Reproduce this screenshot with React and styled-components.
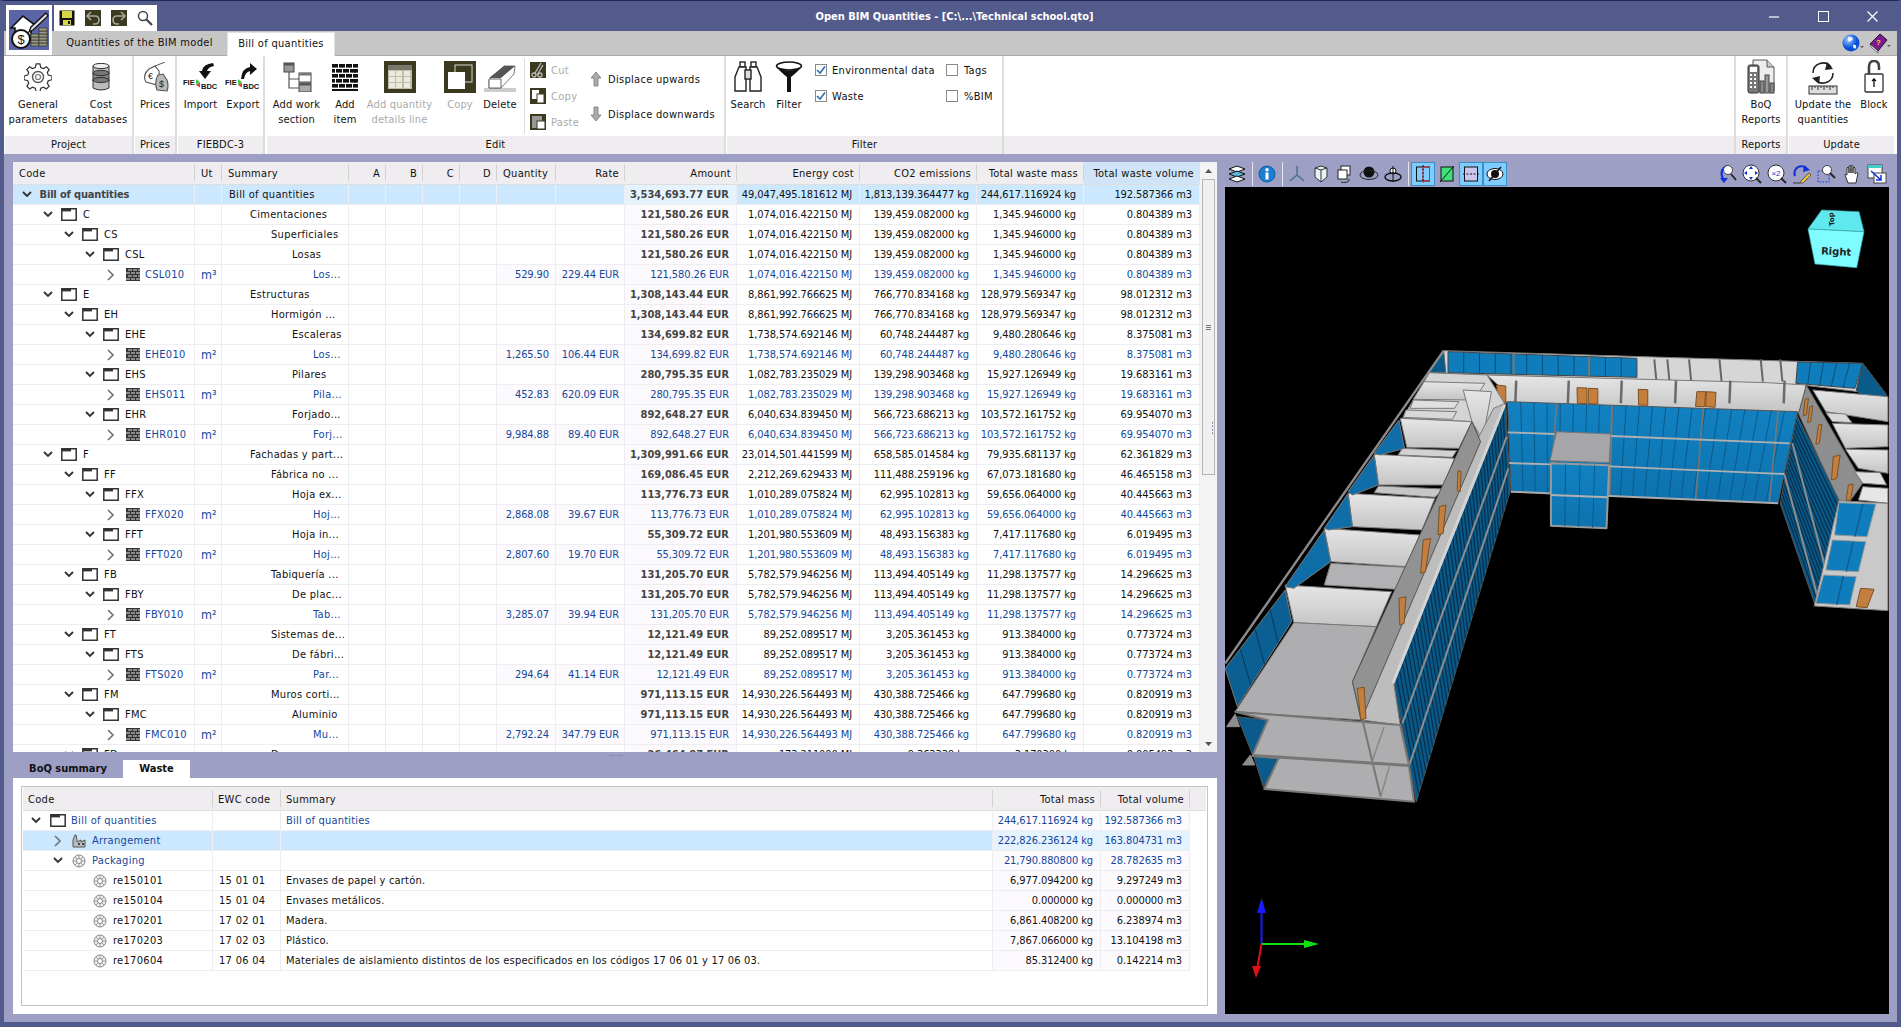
import React from "react";
import styled, { createGlobalStyle } from "styled-components";

const FONT = `"DejaVu Sans Condensed","DejaVu Sans","Liberation Sans",sans-serif`;

const Global = createGlobalStyle`
  html, body { margin: 0; padding: 0; background: #535a8c; overflow: hidden; }
  * { box-sizing: border-box; }
  body { font-family: ${FONT}; font-size: 11px; color: #111; letter-spacing: .3px; }
  svg text { letter-spacing: 0; }
`;

const Window = styled.div`
  position: relative; width: 1901px; height: 1027px; display: flex; flex-direction: column;
  background: #9d9fc5; border-top: 1px solid #1f2658; border-left: 4px solid #535a8c;
  border-right: 4px solid #535a8c; border-bottom: 5px solid #535a8c; overflow: hidden;
`;
const TitleBar = styled.div`
  height: 30px; flex: none; background: #535a8c; display: grid; grid-template-columns: 1fr auto 1fr;
  align-items: start; margin: 0 -4px; padding: 0 4px;
`;
const Title = styled.div`
  color: #fff; font-weight: 700; line-height: 32px; font-size: 11px; padding-left: 8px; letter-spacing: 0;
`;
const QuickAccess = styled.div`
  margin: 4px 0 0 50px; width: 103px; height: 26px; background: #fff; display: flex; align-items: center; gap: 1px;
`;
const QuickIcon = styled.div`
  width: 25px; height: 22px; display: flex; align-items: center; justify-content: center;
`;
const WinButtons = styled.div` display: flex; justify-content: flex-end; `;
const WinBtn = styled.div`
  width: 49px; height: 30px; display: flex; align-items: center; justify-content: center;
`;
const AppButton = styled.div`
  position: absolute; left: 2px; top: 4px; width: 46px; height: 50px; background: #fff; padding: 5px 3px 4px;
`;
const TabRow = styled.div`
  height: 25px; flex: none; background: #c6c6c6; border-bottom: 1px solid #aaa; display: flex; align-items: flex-end; padding-left: 48px;
`;
const RibbonTab = styled.div`
  height: 24px; line-height: 22px; width: ${p => p.$w}px; text-align: center; white-space: nowrap; margin-bottom: -1px;
  ${p => p.$active && `background: #fff; border: 1px solid #e2e2e2; border-bottom: none;`}
`;
const TabEnd = styled.div`
  margin-left: auto; display: flex; align-items: center; height: 24px; gap: 5px; padding-right: 6px;
`;
const Ribbon = styled.div` height: 98px; flex: none; display: flex; background: #fff; padding-left: 1px; letter-spacing: .15px; `;
const Group = styled.div`
  width: ${p => p.$w ? p.$w + "px" : "auto"}; ${p => !p.$w && "flex: 1;"} flex-shrink: 0; display: flex; flex-direction: column;
  margin-right: ${p => p.$gap ?? 1}px; ${p => !p.$last && "border-right: 2px solid #dcdcdc;"}
`;
const GroupBody = styled.div` flex: 1; display: flex; padding-top: 1px; min-height: 0; `;
const GroupLabel = styled.div`
  height: 18px; flex: none; background: #efedef; text-align: center; line-height: 18px; white-space: nowrap;
`;
const BigButton = styled.div`
  width: ${p => p.$w}px; flex: none; display: flex; flex-direction: column; align-items: center;
  color: ${p => p.$off ? "#aaa" : "#111"};
`;
const BigIcon = styled.div` height: 40px; display: flex; align-items: center; justify-content: center; `;
const BigText = styled.div` text-align: center; line-height: 15px; white-space: pre; `;
const SmallCol = styled.div`
  width: ${p => p.$w}px; flex: none; display: flex; flex-direction: column; padding-top: ${p => p.$top}px; gap: ${p => p.$gap}px;
`;
const SmallRow = styled.div`
  display: flex; align-items: center; gap: ${p => p.$gap ?? 5}px; height: 16px; padding-left: ${p => p.$pl ?? 0}px;
  color: ${p => p.$off ? "#aaa" : "#111"}; white-space: nowrap; letter-spacing: .3px;
`;
const VLine = styled.div` width: 1px; margin: 1px 5px 2px 9px; background: #dcdcdc; flex: none; `;
const CheckBox = styled.div`
  width: 12px; height: 12px; border: 1px solid #8a8a8a; background: #fff; display: flex; align-items: center; justify-content: center;
`;

const Main = styled.div` flex: 1; min-height: 0; display: flex; gap: 8px; padding: 8px 8px 8px 9px; `;
const LeftCol = styled.div` width: 1204px; flex: none; display: flex; flex-direction: column; position: relative; `;
const GridWrap = styled.div` height: 590px; flex: none; display: flex; background: #fff; `;
const GridArea = styled.div` width: 1187px; flex: none; overflow: hidden; `;
const T1 = "182px 27px 127px 37px 37px 37px 37px 59px 69px 112px 123px 117px 107px 116px";
const T2 = "190px 68px 712px 108px 89px";
const HeadRow = styled.div`
  display: grid; grid-template-columns: ${p => p.$cols}; height: ${p => p.$h}px; background: #efedef; border-bottom: 1px solid #dedede; align-items: stretch;
`;
const HeadCell = styled.div`
  display: flex; align-items: center; justify-content: ${p => p.$right ? "flex-end" : "flex-start"};
  padding: ${p => p.$pt ?? 0}px 6px 0 ${p => p.$pl ?? 6}px; white-space: nowrap; overflow: hidden; position: relative;
  ${p => p.$hot && "background: #cfe5f7;"}
  &::after { content: ""; position: absolute; right: 0; top: 3px; bottom: 3px; width: 1px; background: ${p => p.$noline ? "transparent" : "#d2d2d2"}; }
`;
const Row = styled.div`
  display: grid; grid-template-columns: ${p => p.$cols}; height: 20px; background: ${p => p.$sel ? "#cce8ff" : "#fff"};
  color: ${p => p.$blue ? "#14479b" : "#111"}; width: ${p => p.$w ? p.$w + "px" : "auto"};
`;
const Cell = styled.div`
  display: flex; align-items: center; justify-content: ${p => p.$right ? "flex-end" : "flex-start"};
  padding: 0 ${p => p.$pr ?? 7}px 0 ${p => p.$pl ?? 7}px; border-right: 1px solid #eeeef0; border-bottom: 1px solid #eeeef0; white-space: nowrap; overflow: hidden;
  ${p => p.$right && "letter-spacing: -.1px;"}
  ${p => p.$tint && `background: ${p.$tint};`}
  ${p => p.$bold && "font-weight: 700; color: #444; letter-spacing: 0;"}
  ${p => p.$blue && "color: #14479b;"}
`;
const UnitCell = styled(Cell)` font-size: 12.5px; letter-spacing: 0; `;
const LongCell = styled(Cell)` letter-spacing: .2px; `;
const CodeCell = styled(Cell)` padding: 0 0 0 ${p => p.$pl}px; `;
const CodeText = styled.span` margin-left: ${p => p.$ml ?? 6}px; ${p => p.$bold && "font-weight:700;color:#444;letter-spacing:-.15px;"} `;
const Chev = styled.span` width: 12px; flex: none; display: flex; justify-content: center; align-items: center; margin-right: ${p => p.$mr ?? 8}px; `;
const ScrollBar = styled.div`
  width: 17px; flex: none; background: #f3f3f3; display: flex; flex-direction: column; align-items: center; position: relative;
`;
const ScrollArrow = styled.div` height: 17px; flex: none; display: flex; align-items: center; justify-content: center; `;
const Thumb = styled.div`
  width: 13px; height: 296px; flex: none; background: #f0f0f0; border: 1px solid #b5b5b5; display: flex; flex-direction: column; justify-content: center; align-items: center; gap: 1px;
`;
const Grip = styled.i` display: block; width: 5px; height: 1px; background: #777; `;
const ScrollFill = styled.div` flex: 1; `;
const SubTabs = styled.div` height: 18px; margin-top: 8px; flex: none; display: flex; `;
const SubTab = styled.div`
  width: ${p => p.$w}px; text-align: center; line-height: 18px; font-weight: 700; font-size: 11px; color: #111; letter-spacing: 0;
  ${p => p.$active && "background:#fff;"}
`;
const LowerPanel = styled.div` flex: 1; background: #fff; padding: 8px 9px 8px 8px; min-height: 0; display: flex; `;
const LowerInner = styled.div` flex: 1; border: 1px solid #c4c4c4; background: #fff; padding: 0 1px; overflow: hidden; `;
const Dots = styled.div`
  position: absolute; left: ${p => p.$x}px; top: ${p => p.$y}px; width: ${p => p.$w}px; height: ${p => p.$h}px;
  background-image: radial-gradient(#77799e 0.8px, transparent 1px);
  background-size: ${p => p.$sx}px ${p => p.$sy}px;
`;
const Viewer = styled.div` width: 664px; flex: none; display: flex; flex-direction: column; `;
const ViewerBar = styled.div` height: 25px; flex: none; display: flex; align-items: flex-start; `;
const ToolBtn = styled.div`
  width: 24px; height: 24px; flex: none; display: flex; align-items: center; justify-content: center;
  ${p => p.$on && "background:#7fcdff;border:1px solid #3a8fc4;"}
  ${p => p.$ml && `margin-left:${p.$ml}px;`}
`;
const ToolSep = styled.div` width: 6px; height: 24px; flex: none; display: flex; justify-content: center; &::after{content:"";width:1px;background:#e6e6ef;} `;
const ToolSpacer = styled.div` flex: 1; `;
const Canvas = styled.div` flex: 1; background: #000; overflow: hidden; min-height: 0; `;
const CanvasSvg = styled.svg` display: block; width: 664px; height: 827px; `;

/* ---------- icons ---------- */
const S = ({ w, h, vb, children }) => <svg width={w} height={h} viewBox={vb || `0 0 ${w} ${h}`} style={{ display: "block", flex: "none" }}>{children}</svg>;

const AppIcon = () => (
  <S w={40} h={40}>
    <rect width="40" height="40" fill="#5a64a6" />
    <path d="M2 18 L14 6 L26 15 L23 18 L22 18 V30 H6 V18 Z" fill="#fff" stroke="#111" strokeWidth="1.6" />
    <path d="M37 3 L39 6 L24 20 L20 22 L22 17 Z" fill="#ddd" stroke="#111" strokeWidth="1.3" />
    <g fill="#9a9a80" stroke="#333" strokeWidth=".7">
      {[0,1,2,3].map(i => <rect key={i} x="22" y={33 - i * 3} width="8" height="3" />)}
      {[0,1,2,3,4,5].map(i => <rect key={i} x="30" y={33 - i * 3} width="8" height="3" />)}
    </g>
    <circle cx="12" cy="29" r="9" fill="#fff" stroke="#111" strokeWidth="2" />
    <text x="12" y="34" textAnchor="middle" fontSize="13" fontFamily="Liberation Sans" fill="#111">$</text>
  </S>
);
const Floppy = () => (
  <S w={16} h={16}>
    <rect x=".5" y=".5" width="15" height="15" fill="#111" />
    <rect x="3" y="1" width="10" height="7" fill="#d8d44a" />
    <rect x="4" y="10" width="8" height="5" fill="#d8d44a" />
    <rect x="9" y="11" width="2" height="3" fill="#111" />
  </S>
);
const UndoIcon = ({ flip }) => (
  <S w={16} h={16}>
    <rect width="16" height="16" fill="#3c3a1e" />
    <g transform={flip ? "translate(16,0) scale(-1,1)" : ""} fill="none" stroke="#a8a8a0" strokeWidth="1.6">
      <path d="M3 6 H10 Q14 6 14 10 Q14 14 10 14 H8" />
      <path d="M6 2 L2 6 L6 10" />
    </g>
  </S>
);
const Magnifier = ({ s = 16 }) => (
  <S w={s} h={s} vb="0 0 16 16">
    <circle cx="6" cy="6" r="4.5" fill="#fff" stroke="#444" strokeWidth="1.5" />
    <path d="M9.5 9.5 L15 15" stroke="#444" strokeWidth="2.2" />
  </S>
);
const Gear = () => (
  <S w={28} h={28}>
    <path d="M12 1 h4 l1 4 3 1 3-2 3 3-2 3 1 3 4 1 v4 l-4 1 -1 3 2 3 -3 3 -3-2 -3 1 -1 4 h-4 l-1-4 -3-1 -3 2 -3-3 2-3 -1-3 -4-1 v-4 l4-1 1-3 -2-3 3-3 3 2 3-1 z"
      transform="translate(1 0) scale(.93)" fill="#fff" stroke="#333" strokeWidth="1.3" />
    <circle cx="14" cy="14" r="5.5" fill="#fff" stroke="#555" strokeWidth="1.4" />
    <circle cx="14" cy="14" r="2.5" fill="#fff" stroke="#777" strokeWidth="1.2" />
  </S>
);
const DbIcon = () => (
  <S w={18} h={28}>
    {[3, 10, 17].map(y => (
      <g key={y}>
        <path d={`M1 ${y} V${y + 8} Q9 ${y + 12} 17 ${y + 8} V${y} Z`} fill={y === 10 ? "#888" : "#bbb"} stroke="#333" />
        <ellipse cx="9" cy={y} rx="8" ry="2.6" fill={y === 3 ? "#eee" : "#777"} stroke="#333" />
      </g>
    ))}
  </S>
);
const TagsIcon = () => (
  <S w={28} h={30}>
    <path d="M8 7 L14 4 L18 9 Q19 17 16 23 L5 20 Q1 13 8 7 Z" fill="#fff" stroke="#555" strokeWidth="1.1" />
    <path d="M17 13 L22 12 L26 18 Q28 24 26 29 L16 28 Q13 20 17 13 Z" fill="#bbb" stroke="#555" strokeWidth="1.1" />
    <text x="9.5" y="17" textAnchor="middle" fontSize="9" fontFamily="Liberation Sans" fill="#222">€</text>
    <text x="20.5" y="25" textAnchor="middle" fontSize="9" fontFamily="Liberation Sans" fill="#222">$</text>
    <path d="M14 4 L24 0" stroke="#555" />
  </S>
);
const FieIcon = ({ up }) => (
  <S w={36} h={30}>
    <g transform="translate(16 0)">
      {up
        ? <path d="M0 17 Q1 6 9 5 V1 L16 7 L9 13 V9 Q4 10 3 17 Z" fill="#111" />
        : <path d="M14 1 Q4 2 3 9 H0 L6 17 L12 9 H8 Q9 5 15 4 Z" fill="#111" />}
    </g>
    <text x="0" y="23" fontSize="7.5" fontWeight="700" fontFamily="Liberation Sans" fill="#111">FIE</text>
    <text x="18" y="26.5" fontSize="7.5" fontWeight="700" fontFamily="Liberation Sans" fill="#111">BDC</text>
    <path d="M13 17 L17 20 L13 23 Z" fill="#3fcf3f" />
    <path d="M17 24 L13 26.5 L17 29 Z" transform="translate(0 -3.5)" fill="#e23a3a" />
  </S>
);
const TreeIcon = () => (
  <S w={30} h={30}>
    <rect x="2" y="1" width="10" height="9" fill="#999" stroke="#444" />
    <rect x="2" y="1" width="10" height="2.5" fill="#555" />
    <path d="M7 10 V26 H18 M7 17 H18" fill="none" stroke="#555" strokeWidth="1.2" />
    <rect x="17" y="11" width="12" height="9" fill="#fff" stroke="#444" /><rect x="17" y="11" width="12" height="2.5" fill="#777" />
    <rect x="17" y="21" width="12" height="9" fill="#aaa" stroke="#444" /><rect x="17" y="21" width="12" height="2.5" fill="#555" />
  </S>
);
const BrickBig = () => (
  <S w={26} h={28}>
    {[0, 1, 2, 3, 4].map(r => [0, 1, 2, 3].map(c => (
      <rect key={`${r}${c}`} x={(r % 2 ? -3 : 0) + c * 7} y={1 + r * 5} width="6" height="3.6" fill="#111" />
    )))}
    <rect x="0" y="26" width="26" height="2" fill="#111" />
    <rect x="22" y="6" width="4" height="3.6" fill="#111" /><rect x="22" y="16" width="4" height="3.6" fill="#111" />
  </S>
);
const TableIcon = () => (
  <S w={32} h={32}>
    <rect width="32" height="32" fill="#3c3a1e" />
    <rect x="4" y="4" width="24" height="24" fill="#bdbdb0" />
    <rect x="4" y="4" width="24" height="5" fill="#77776a" />
    {[10, 16, 22].map(y => [5, 12, 20].map(x => <rect key={`${x}${y}`} x={x} y={y} width="6" height="5" fill="#e9e9dc" />))}
  </S>
);
const CopyBig = () => (
  <S w={32} h={32}>
    <rect width="32" height="32" fill="#3c3a1e" />
    <rect x="11" y="4" width="17" height="17" fill="none" stroke="#d5d5d5" />
    <rect x="4" y="11" width="17" height="17" fill="#fff" />
  </S>
);
const Eraser = () => (
  <S w={32} h={30}>
    <path d="M0 26 H32 V30 H0 Z" fill="#ccc" />
    <path d="M5 18 L20 4 H31 L30 12 L17 26 H5 Z" fill="#fff" stroke="#777" />
    <path d="M17 16 L31 4 H20 L5 16 Z" fill="#555" />
    <path d="M5 17 H17 V26 H5 Z" fill="#fff" stroke="#666" />
  </S>
);
const SmallOlive = ({ kind }) => (
  <S w={16} h={16}>
    <rect width="16" height="16" fill="#3c3a1e" />
    {kind === "cut" && <g stroke="#bbb" fill="none" strokeWidth="1.3"><path d="M11 1 L5 11 M13 3 L7 13" /><circle cx="4" cy="13" r="2" /><circle cx="10" cy="13" r="2" /></g>}
    {kind === "copy" && <g fill="#fff"><rect x="2" y="2" width="7" height="9" /><rect x="7" y="6" width="7" height="9" stroke="#3c3a1e" /></g>}
    {kind === "paste" && <g><rect x="2" y="2" width="10" height="12" fill="#999" /><rect x="7" y="7" width="8" height="8" fill="#fff" stroke="#3c3a1e" /></g>}
  </S>
);
const ArrowUD = ({ down }) => (
  <S w={12} h={16}>
    <path d={down ? "M4 1 H8 V9 H11 L6 15 L1 9 H4 Z" : "M6 1 L11 7 H8 V15 H4 V7 H1 Z"} fill="#aaa" stroke="#888" />
  </S>
);
const Binoculars = () => (
  <S w={28} h={32}>
    <g fill="#fff" stroke="#222" strokeWidth="1.4">
      <rect x="6" y="1" width="5" height="5" /><rect x="17" y="1" width="5" height="5" />
      <path d="M5 6 H12 V14 H12 V30 H1 V16 Z" /><path d="M16 6 H23 L27 16 V30 H16 V14 Z" />
      <rect x="11" y="9" width="6" height="9" fill="#ddd" />
    </g>
  </S>
);
const Funnel = () => (
  <S w={28} h={32}>
    <ellipse cx="14" cy="5" rx="12.5" ry="4" fill="#fff" stroke="#111" strokeWidth="1.5" />
    <path d="M2 7 Q8 13 12 16 V31 H16 V16 Q20 13 26 7 Q14 12 2 7 Z" fill="#111" />
  </S>
);
const Check = () => <S w={10} h={10}><path d="M1 5 L4 8 L9 1.5" fill="none" stroke="#2a6fb5" strokeWidth="1.6" /></S>;
const ReportIcon = () => (
  <S w={28} h={36}>
    <path d="M6 1 H20 L27 8 V32 H6 Z" fill="#eee" stroke="#555" />
    <path d="M20 1 V8 H27" fill="#ccc" stroke="#555" />
    <rect x="1" y="6" width="11" height="28" rx="2" fill="#777" stroke="#333" />
    <rect x="3" y="8" width="7" height="5" fill="#fff" />
    {[15, 19, 23, 27].map(y => <g key={y}><rect x="3" y={y} width="2" height="2" fill="#fff" /><rect x="7" y={y} width="2" height="2" fill="#fff" /></g>)}
    <rect x="13" y="22" width="4" height="12" fill="#888" stroke="#444" />
    <rect x="18" y="16" width="4" height="18" fill="#999" stroke="#444" />
    <rect x="23" y="24" width="4" height="10" fill="#888" stroke="#444" />
  </S>
);
const UpdateIcon = () => (
  <S w={30} h={36}>
    <path d="M5 14 A10 10 0 0 1 23 8" fill="none" stroke="#222" strokeWidth="1.5" /><path d="M19 3 L25 10 L17 11 Z" fill="#222" />
    <path d="M25 14 A10 10 0 0 1 7 20" fill="none" stroke="#222" strokeWidth="1.5" /><path d="M11 25 L4 19 L12 17 Z" fill="#222" />
    <rect x="1" y="27" width="28" height="8" fill="#ddd" stroke="#333" />
    <path d="M4 27 v4 M7 27 v2 M10 27 v4 M13 27 v2 M16 27 v4 M19 27 v2 M22 27 v4 M25 27 v2" stroke="#333" />
  </S>
);
const LockIcon = () => (
  <S w={20} h={34}>
    <path d="M5 14 V7 Q5 1 10 1 Q15 1 15 7 V10" fill="none" stroke="#444" strokeWidth="2.6" />
    <rect x="1" y="14" width="18" height="18" rx="1" fill="#fff" stroke="#333" strokeWidth="1.3" />
    <path d="M10 19 V27 M8 21 L10 19 L12 21" stroke="#111" fill="none" strokeWidth="1.3" />
  </S>
);
const Globe = () => (
  <S w={22} h={22}>
    <defs><radialGradient id="gl" cx=".35" cy=".3"><stop offset="0" stopColor="#9fd0ff" /><stop offset="1" stopColor="#0b4fd8" /></radialGradient></defs>
    <circle cx="9" cy="11" r="8.5" fill="url(#gl)" />
    <path d="M6 5 Q10 4 11 7 Q8 11 6 9 Z M11 13 Q15 12 14 16 Q11 18 11 13 Z" fill="#e9f3ff" />
    <path d="M18 14 h4 l-2 2 z" fill="#555" />
  </S>
);
const HelpBook = () => (
  <S w={22} h={22}>
    <path d="M1 12 L11 2 L18 8 L9 19 Z" fill="#7d1a8f" stroke="#2a0e33" />
    <path d="M1 12 L9 19 L9 21 L2 15 Z" fill="#eee" stroke="#333" strokeWidth=".6" />
    <text x="9.5" y="13" textAnchor="middle" fontSize="8" fontWeight="700" fontFamily="Liberation Sans" fill="#f2d43a">?</text>
    <path d="M18 13 h4 l-2 2 z" fill="#555" />
  </S>
);
const ChevDown = () => <S w={10} h={7}><path d="M1 1 L5 5 L9 1" fill="none" stroke="#333" strokeWidth="1.9" /></S>;
const ChevRight = () => <S w={7} h={12}><path d="M1 1 L6 6 L1 11" fill="none" stroke="#777" strokeWidth="1.7" /></S>;
const Folder = () => (
  <S w={16} h={13}>
    <path d="M.8 .8 H15.2 V12.2 H.8 Z" fill="#fff" stroke="#333" strokeWidth="1.5" />
    <rect x="1" y="1" width="9" height="2.4" fill="#333" />
  </S>
);
const BrickSmall = () => (
  <S w={14} h={13}>
    <rect width="14" height="13" fill="#333" />
    {[0, 1, 2, 3].map(r => [0, 1, 2].map(c => <rect key={`${r}${c}`} x={(r % 2 ? 0 : 2) + c * 5} y={1 + r * 3} width="4" height="2" fill="#8a8a8a" />))}
  </S>
);
const WasteIcon = () => (
  <S w={14} h={14}>
    <circle cx="7" cy="7" r="6" fill="#eee" stroke="#888" />
    <path d="M7 1 V13 M1 7 H13 M3 3 L11 11 M11 3 L3 11" stroke="#999" strokeWidth=".9" />
    <circle cx="7" cy="7" r="2.5" fill="#fff" stroke="#888" />
  </S>
);
const FactoryIcon = () => (
  <S w={14} h={14}>
    <path d="M1 13 V6 L3 1 H4 L5 6 V8 L9 6 V8 L13 6 V13 Z" fill="#bbb" stroke="#555" />
    <rect x="6" y="9" width="2" height="2" fill="#444" /><rect x="10" y="9" width="2" height="2" fill="#444" />
  </S>
);
const ArrowTiny = ({ down }) => <S w={9} h={6}><path d={down ? "M1 1 H8 L4.5 5 Z" : "M1 5 H8 L4.5 1 Z"} fill="#555" /></S>;

const tb = {
  layers: <S w={18} h={18}><g stroke="#111" fill="#fff"><path d="M1 4 L9 1 L17 4 L9 7 Z" /><path d="M1 9 L9 6 L17 9 L9 12 Z" fill="#5fb6d8" /><path d="M1 14 L9 11 L17 14 L9 17 Z" /></g></S>,
  info: <S w={18} h={18}><circle cx="9" cy="9" r="8" fill="#1a7fd1" stroke="#0c5ea0" /><rect x="7.5" y="7.5" width="3" height="7" fill="#fff" /><circle cx="9" cy="4.8" r="1.7" fill="#fff" /></S>,
  axes: <S w={18} h={18}><path d="M9 1 V10 L2 16 M9 10 L16 16" fill="none" stroke="#46727f" strokeWidth="1.4" /></S>,
  box: <S w={18} h={18}><path d="M3 3 L9 1 L15 3 V12 L9 17 L3 12 Z" fill="#e8f4f4" stroke="#333" /><path d="M3 3 L9 5 L15 3 M9 5 V17" fill="none" stroke="#333" /></S>,
  cube2: <S w={18} h={18}><rect x="5" y="1" width="9" height="9" fill="#fff" stroke="#222" /><rect x="2" y="5" width="9" height="9" fill="#fff" stroke="#222" /><path d="M5 17 A5 3 0 0 0 13 14" fill="none" stroke="#222" /></S>,
  sphere: <S w={20} h={18}><circle cx="10" cy="7" r="5.5" fill="#111" /><ellipse cx="10" cy="10" rx="9" ry="4.5" fill="none" stroke="#222" /></S>,
  orbit: <S w={20} h={18}><circle cx="10" cy="6" r="3" fill="#fff" stroke="#111" /><path d="M10 1 V17" stroke="#111" /><ellipse cx="10" cy="12" rx="8" ry="4" fill="none" stroke="#111" strokeWidth="1.4" /></S>,
  clip1: <S w={16} h={18}><rect x="1.5" y="2" width="13" height="14" fill="none" stroke="#111" /><rect x="8" y="2" width="6.5" height="14" fill="none" stroke="#e32222" /><path d="M8 0 V18" stroke="#111" strokeDasharray="2 1.5" /></S>,
  clip2: <S w={16} h={18}><rect x="2" y="2" width="12" height="14" fill="#3fe07a" stroke="#111" /><path d="M1 17 L15 1" stroke="#111" /></S>,
  clip3: <S w={16} h={18}><rect x="1.5" y="2" width="13" height="14" fill="#c9c6ea" stroke="#111" /><path d="M0 9 H16" stroke="#111" strokeDasharray="2 1.5" /></S>,
  eye: <S w={18} h={16}><ellipse cx="9" cy="8" rx="8" ry="5.5" fill="#fff" stroke="#111" /><circle cx="9" cy="8" r="4" fill="#111" /><path d="M3 15 L15 1" stroke="#111" strokeWidth="1.5" /></S>,
  zoomPrev: <S w={20} h={20}><path d="M7 17 Q1 6 10 2" fill="none" stroke="#1430d8" strokeWidth="2.2" /><path d="M3 14 L7 19 L11 14 Z" fill="#1430d8" /><circle cx="11" cy="6" r="4.5" fill="#fff" stroke="#444" /><path d="M14 10 L19 16" stroke="#222" strokeWidth="1.8" /></S>,
  zoomAll: <S w={20} h={20}><circle cx="9" cy="9" r="8" fill="#fff" stroke="#333" /><path d="M9 2 L11 5 H7 Z M9 16 L11 13 H7 Z M2 9 L5 7 V11 Z M16 9 L13 7 V11 Z" fill="#1430d8" /><path d="M14 14 L19 19" stroke="#222" strokeWidth="1.8" /></S>,
  zoom2: <S w={20} h={20}><circle cx="9" cy="9" r="8" fill="#fff" stroke="#333" /><text x="9" y="12" textAnchor="middle" fontSize="8" fontFamily="Liberation Sans" fill="#1430d8">×2</text><path d="M14 14 L19 19" stroke="#222" strokeWidth="1.8" /></S>,
  redraw: <S w={20} h={20}><path d="M3 12 A7 7 0 0 1 15 5" fill="none" stroke="#1430d8" strokeWidth="2" /><path d="M12 1 L18 6 L11 8 Z" fill="#1430d8" /><path d="M9 17 L17 9 L19 11 L11 19 L8 19 Z" fill="#f0c23a" stroke="#333" strokeWidth=".7" /><path d="M1 19 H8" stroke="#333" /></S>,
  zoomWin: <S w={20} h={20}><rect x="1" y="7" width="11" height="11" fill="none" stroke="#1430d8" strokeDasharray="1.5 1.5" /><circle cx="10" cy="6" r="4.5" fill="#fff" stroke="#444" /><path d="M13 9 L18 14" stroke="#222" strokeWidth="1.8" /></S>,
  hand: <S w={18} h={20}><path d="M5 19 L2 11 Q2 9 4 11 V4 Q5 2 6 4 V9 V2 Q7 1 8 2 V9 V2 Q9 1 10 2 V9 V4 Q11 2 12 4 V10 Q14 8 15 9 L13 19 Z" fill="#fff" stroke="#333" /></S>,
  maxV: <S w={20} h={20}><rect x="1" y="1" width="14" height="13" fill="#fff" stroke="#444" /><rect x="1" y="1" width="14" height="3" fill="#3fd0c8" /><rect x="7" y="9" width="12" height="10" fill="#fff" stroke="#444" /><path d="M4 7 L14 16 M14 11 V16 H9" fill="none" stroke="#1430d8" strokeWidth="1.5" /></S>,
};

/* ---------- 3D model, drawn in the crop's coordinates ---------- */
const lerp = (a, b, t) => [a[0] + (b[0] - a[0]) * t, a[1] + (b[1] - a[1]) * t];
const Poly = ({ p, f, s = "#7a7a7a", w = 1 }) => <polygon points={p} fill={f} stroke={s} strokeWidth={w} vectorEffect="non-scaling-stroke" strokeLinejoin="round" />;
const L = ({ a, b, s = "#888", w = 1.2 }) => <line x1={a[0]} y1={a[1]} x2={b[0]} y2={b[1]} stroke={s} strokeWidth={w} vectorEffect="non-scaling-stroke" />;
const Mull = ({ a, b, c, d, n, s, w = 1 }) => <>{Array.from({ length: n - 1 }, (_, i) => { const t = (i + 1) / n; return <L key={i} a={lerp(a, b, t)} b={lerp(c, d, t)} s={s} w={w} />; })}</>;
const Door = ({ p }) => <Poly p={p} f="#c47f3e" s="#7a5228" />;

const Model = () => (
  <g transform="translate(-5,153) scale(0.4343,0.33333)">
    <defs>
      <linearGradient id="wall" x1="0" y1="0" x2="0" y2="1"><stop offset="0" stopColor="#e6e6e6" /><stop offset="1" stopColor="#c4c4c4" /></linearGradient>
      <linearGradient id="glass" x1="0" y1="0" x2="0" y2="1"><stop offset="0" stopColor="#1282c2" /><stop offset="1" stopColor="#0d72ae" /></linearGradient>
    </defs>
    {/* back façade */}
    <Poly p="515,32 1480,70 1535,165 1340,135 620,105 480,98" f="#d6d6d6" />
    <Poly p="525,35 960,55 960,112 525,98" f="#0f7cbc" s="#444" />
    <Mull a={[525, 35]} b={[960, 55]} c={[525, 98]} d={[960, 112]} n={12} s="#0a4f78" />
    <L a={[676, 42]} b={[676, 102]} s="#777" w={2} /><L a={[850, 50]} b={[850, 108]} s="#777" w={2} />
    <Poly p="1330,66 1480,70 1462,145 1326,130" f="#0f7cbc" s="#444" />
    <Mull a={[1330, 66]} b={[1480, 70]} c={[1326, 130]} d={[1462, 145]} n={5} s="#0a4f78" />
    <Poly p="1480,70 1535,165 1530,245 1465,150" f="#0a5a8a" s="#444" />
    <Poly p="515,32 480,98 520,98" f="#0a5a8a" s="#666" />
    {[1000, 1030, 1080, 1150, 1245, 1290].map(x => <L key={x} a={[x, 58]} b={[x + 5, 125]} s="#666" w={2} />)}
    {/* corridor wall */}
    <Poly p="615,105 1260,128 1350,135 1340,218 660,188 640,135" f="url(#wall)" />
    {[682, 803, 925, 1050, 1175, 1300].map(x => <L key={x} a={[x, 122]} b={[x - 2, 190]} s="#6a6a6a" w={2.5} />)}
    <Door p="637,135 658,138 658,187 640,186" />
    <Door p="822,143 845,144 845,191 823,190" />
    <Door p="848,145 870,146 870,192 848,191" />
    <Door p="963,148 985,149 985,196 964,195" />
    <Door p="1098,155 1118,155 1116,200 1095,199" />
    <Door p="1120,155 1142,157 1140,202 1118,200" />
    {/* upper-left room cluster */}
    <Poly p="482,98 615,105 655,190 600,305 582,245 420,235 470,125" f="#d4d4d4" />
    <Poly p="470,125 610,130 585,180 445,178" f="url(#wall)" />
    <Poly p="445,180 550,185 540,205 438,205" f="#e0e0e0" />
    <Poly p="428,210 545,215 535,238 422,232" f="#d8d8d8" />
    <Poly p="560,150 625,155 605,300 580,245" f="url(#wall)" />
    {/* front façade */}
    <Poly p="662,185 1330,215 1285,490 670,455" f="url(#glass)" s="#555" />
    <Mull a={[662, 185]} b={[1330, 215]} c={[670, 455]} d={[1285, 490]} n={22} s="#0a5a8c" />
    <L a={[775, 190]} b={[765, 370]} s="#777" w={1.6} />
    <L a={[903, 197]} b={[897, 465]} s="#777" w={2} />
    <L a={[1113, 205]} b={[1095, 480]} s="#777" w={1.6} />
    <L a={[1285, 213]} b={[1265, 485]} s="#777" w={1.6} />
    <L a={[662, 277]} b={[770, 282]} s="#b0b0b0" w={1.8} />
    <L a={[900, 288]} b={[1312, 310]} s="#b0b0b0" w={1.8} />
    <L a={[664, 369]} b={[762, 373]} s="#b0b0b0" w={1.8} />
    <L a={[898, 379]} b={[1300, 402]} s="#b0b0b0" w={1.8} />
    <L a={[670, 455]} b={[1285, 490]} s="#aaa" w={2} />
    {/* porch */}
    <Poly p="775,275 900,282 896,368 760,362" f="#a6a5a8" s="#777" />
    <Poly p="762,370 896,376 890,565 762,557" f="url(#glass)" s="#999" w={2} />
    <Mull a={[762, 372]} b={[896, 378]} c={[762, 557]} d={[890, 565]} n={4} s="#0a5a8c" />
    <L a={[762, 465]} b={[892, 472]} s="#b0b0b0" w={2} />
    {/* left wing right façade */}
    <Poly p="658,190 668,455 452,1385 400,1030" f="#0a5886" s="#555" />
    <Mull a={[658, 190]} b={[400, 1030]} c={[668, 455]} d={[452, 1385]} n={40} s="#052f4e" w={1.2} />
    <L a={[660, 290]} b={[420, 1150]} s="#8e8e8e" w={2} />
    <L a={[664, 385]} b={[436, 1275]} s="#8e8e8e" w={2} />
    {/* left wing interior: rooms */}
    <Poly p="150,735 395,755 360,860 170,848" f="url(#wall)" />
    <Poly p="240,565 460,585 430,680 255,665" f="url(#wall)" />
    <Poly p="295,460 495,475 465,570 305,560" f="url(#wall)" />
    <Poly p="355,343 540,355 515,435 365,435" f="url(#wall)" />
    <Poly p="415,235 580,245 550,325 430,322" f="url(#wall)" />
    <Poly p="255,670 430,682 405,748 240,735" f="#b2b1b4" />
    <Poly p="365,438 515,447 495,472 355,458" f="#c6c6c6" />
    <Poly p="420,325 545,332 535,352 410,345" f="#d2d2d2" />
    <Poly p="170,848 360,860 305,1025 325,1140 35,1115" f="#aeadb0" />
    {/* window strips on the outer wall */}
    <Poly p="12,985 150,750 165,845 40,1100" f="#0b5f93" s="#777" />
    <Mull a={[12, 985]} b={[150, 750]} c={[40, 1100]} d={[165, 845]} n={4} s="#06395c" />
    <Poly p="150,740 240,570 255,665 170,745" f="#0f6ea8" s="#777" />
    <Poly p="240,565 295,460 305,560 250,570" f="#0f6ea8" s="#777" />
    <Poly p="295,455 355,345 365,435 305,465" f="#0f6ea8" s="#777" />
    <Poly p="355,340 412,240 425,325 368,345" f="#0f6ea8" s="#777" />
    <L a={[515, 32]} b={[12, 970]} s="#8c8c8c" w={2.4} />
    {/* corridor wall of left wing */}
    <Poly p="630,205 305,1025 325,1140 415,1155 400,1030 658,190" f="#bdbdbd" />
    <Poly p="580,245 305,1025 325,1140 600,305" f="#929292" s="#555" />
    <L a={[655, 195]} b={[398, 1030]} s="#d4d4d4" w={3} />
    {/* left-wing doors */}
    {["548,392 555,395 553,455 546,452", "505,500 520,495 514,580 502,585", "468,600 485,595 473,695 462,700", "412,775 428,770 424,850 414,855", "316,1045 332,1042 336,1135 324,1140"].map(p => <Door key={p} p={p} />)}
    {/* lower floors */}
    <Poly p="40,1130 110,1140 75,1245" f="#0a5a8c" s="#555" />
    <Poly p="78,1250 135,1255 100,1342" f="#0a5a8c" s="#555" />
    <Poly p="35,1115 415,1155 435,1275 75,1245 110,1140" f="#aeadb0" s="#777" w={2} />
    <Poly p="75,1248 435,1278 447,1385 102,1347 135,1255" f="#aeadb0" s="#777" w={2} />
    <L a={[328, 1140]} b={[370, 1370]} s="#777" w={2} />
    <L a={[378, 1160]} b={[350, 1265]} s="#888" w={1.5} />
    <L a={[390, 1280]} b={[370, 1370]} s="#888" w={1.5} />
    <Poly p="15,1160 45,1160 35,1122" f="#8d8d8d" s="#8d8d8d" />
    <Poly p="52,1275 80,1275 70,1245" f="#8d8d8d" s="#8d8d8d" />
    {/* right wing */}
    <Poly p="1350,135 1480,430 1450,485 1425,485 1332,222" f="#8e8e8e" s="#555" />
    <Poly p="1328,225 1425,480 1412,590 1370,795 1290,490" f="#0a5886" s="#555" />
    <Mull a={[1328, 225]} b={[1290, 490]} c={[1425, 480]} d={[1370, 795]} n={18} s="#052f4e" w={1.2} />
    <L a={[1318, 310]} b={[1395, 690]} s="#8e8e8e" w={2} />
    <L a={[1300, 405]} b={[1378, 780]} s="#8e8e8e" w={2} />
    <Door p="1347,178 1355,175 1350,225 1343,228" />
    <Door p="1358,200 1365,198 1360,245 1353,248" />
    <Door p="1378,255 1386,252 1380,310 1372,313" />
    <Door p="1412,350 1428,345 1420,415 1408,420" />
    <Door p="1447,435 1458,432 1452,480 1442,480" />
    <Poly p="1365,150 1538,170 1538,245 1395,215" f="url(#wall)" />
    <Poly p="1395,218 1440,222 1455,248 1410,245" f="#d8d8d8" />
    <Poly p="1410,250 1538,255 1538,320 1440,325" f="url(#wall)" />
    <Poly p="1440,328 1538,330 1538,400 1470,385" f="url(#wall)" />
    <Poly p="1462,395 1520,398 1535,435 1480,430" f="#e0e0e0" />
    <Poly p="1480,440 1538,445 1538,490 1470,480" f="#e6e6e6" />
    <Poly p="1425,482 1538,490 1538,812 1368,798" f="#c9c9c9" s="#777" />
    <Poly p="1425,488 1510,492 1490,590 1415,585" f="#0f7cbc" s="#999" />
    <Poly p="1410,600 1487,605 1470,695 1395,690" f="#0f7cbc" s="#999" />
    <Poly p="1390,705 1465,710 1450,795 1372,790" f="#0f7cbc" s="#999" />
    <L a={[1480, 492]} b={[1462, 590]} s="#0a5a8c" /><L a={[1458, 605]} b={[1442, 695]} s="#0a5a8c" /><L a={[1435, 708]} b={[1420, 795]} s="#0a5a8c" />
    <Door p="1475,745 1506,748 1490,803 1465,800" />
  </g>
);

const Cube = () => (
  <g>
    <polygon points="596.7,23 634,24.7 639,44.7 583,42" fill="#5fe8ee" stroke="#3aa7ad" strokeWidth=".7" />
    <polygon points="583,42 639,44.7 631.7,80.7 590,77" fill="#7ffcff" stroke="#3aa7ad" strokeWidth=".7" />
    <text transform="translate(611,68) rotate(3)" textAnchor="middle" fontFamily="DejaVu Sans" fontWeight="700" fontSize="10" fill="#222">Right</text>
    <text transform="translate(609,32) rotate(-95)" textAnchor="middle" fontFamily="DejaVu Sans" fontWeight="700" fontSize="7" fill="#222">Top</text>
  </g>
);
const Axes = () => (
  <g transform="translate(0 1)">
    <line x1="36.5" y1="756" x2="36.5" y2="720" stroke="#1a1aff" strokeWidth="2" />
    <polygon points="36.5,710 32,725 41,725" fill="#1a1aff" />
    <line x1="36.5" y1="756" x2="80" y2="756" stroke="#12e012" strokeWidth="2" />
    <polygon points="94,756 79,752 79,760" fill="#12e012" />
    <line x1="36.5" y1="756" x2="32" y2="782" stroke="#e01010" strokeWidth="2" />
    <polygon points="31,790 27,778 36,778" fill="#e01010" />
  </g>
);

/* ---------- data ---------- */
const V = {
  root: ["3,534,693.77 EUR", "49,047,495.181612 MJ", "1,813,139.364477 kg", "244,617.116924 kg", "192.587366 m3"],
  c: ["121,580.26 EUR", "1,074,016.422150 MJ", "139,459.082000 kg", "1,345.946000 kg", "0.804389 m3"],
  e: ["1,308,143.44 EUR", "8,861,992.766625 MJ", "766,770.834168 kg", "128,979.569347 kg", "98.012312 m3"],
  ehe: ["134,699.82 EUR", "1,738,574.692146 MJ", "60,748.244487 kg", "9,480.280646 kg", "8.375081 m3"],
  ehs: ["280,795.35 EUR", "1,082,783.235029 MJ", "139,298.903468 kg", "15,927.126949 kg", "19.683161 m3"],
  ehr: ["892,648.27 EUR", "6,040,634.839450 MJ", "566,723.686213 kg", "103,572.161752 kg", "69.954070 m3"],
  f: ["1,309,991.66 EUR", "23,014,501.441599 MJ", "658,585.014584 kg", "79,935.681137 kg", "62.361829 m3"],
  ff: ["169,086.45 EUR", "2,212,269.629433 MJ", "111,488.259196 kg", "67,073.181680 kg", "46.465158 m3"],
  ffx: ["113,776.73 EUR", "1,010,289.075824 MJ", "62,995.102813 kg", "59,656.064000 kg", "40.445663 m3"],
  fft: ["55,309.72 EUR", "1,201,980.553609 MJ", "48,493.156383 kg", "7,417.117680 kg", "6.019495 m3"],
  fb: ["131,205.70 EUR", "5,782,579.946256 MJ", "113,494.405149 kg", "11,298.137577 kg", "14.296625 m3"],
  ft: ["12,121.49 EUR", "89,252.089517 MJ", "3,205.361453 kg", "913.384000 kg", "0.773724 m3"],
  fm: ["971,113.15 EUR", "14,930,226.564493 MJ", "430,388.725466 kg", "647.799680 kg", "0.820919 m3"],
  fd: ["26,464.87 EUR", "173.211000 MJ", "9.363339 kg", "3.170390 kg", "0.005493 m3"],
};
const ROWS = [
  [0, "Bill of quantities", "", "Bill of quantities", "", "", V.root],
  [1, "C", "", "Cimentaciones", "", "", V.c],
  [2, "CS", "", "Superficiales", "", "", V.c],
  [3, "CSL", "", "Losas", "", "", V.c],
  [4, "CSL010", "m³", "Los...", "529.90", "229.44 EUR", V.c],
  [1, "E", "", "Estructuras", "", "", V.e],
  [2, "EH", "", "Hormigón ...", "", "", V.e],
  [3, "EHE", "", "Escaleras", "", "", V.ehe],
  [4, "EHE010", "m²", "Los...", "1,265.50", "106.44 EUR", V.ehe],
  [3, "EHS", "", "Pilares", "", "", V.ehs],
  [4, "EHS011", "m³", "Pila...", "452.83", "620.09 EUR", V.ehs],
  [3, "EHR", "", "Forjado...", "", "", V.ehr],
  [4, "EHR010", "m²", "Forj...", "9,984.88", "89.40 EUR", V.ehr],
  [1, "F", "", "Fachadas y part...", "", "", V.f],
  [2, "FF", "", "Fábrica no ...", "", "", V.ff],
  [3, "FFX", "", "Hoja ex...", "", "", V.ffx],
  [4, "FFX020", "m²", "Hoj...", "2,868.08", "39.67 EUR", V.ffx],
  [3, "FFT", "", "Hoja in...", "", "", V.fft],
  [4, "FFT020", "m²", "Hoj...", "2,807.60", "19.70 EUR", V.fft],
  [2, "FB", "", "Tabiquería ...", "", "", V.fb],
  [3, "FBY", "", "De plac...", "", "", V.fb],
  [4, "FBY010", "m²", "Tab...", "3,285.07", "39.94 EUR", V.fb],
  [2, "FT", "", "Sistemas de...", "", "", V.ft],
  [3, "FTS", "", "De fábri...", "", "", V.ft],
  [4, "FTS020", "m²", "Par...", "294.64", "41.14 EUR", V.ft],
  [2, "FM", "", "Muros corti...", "", "", V.fm],
  [3, "FMC", "", "Aluminio", "", "", V.fm],
  [4, "FMC010", "m²", "Mu...", "2,792.24", "347.79 EUR", V.fm],
  [2, "FD", "", "De...", "", "", V.fd],
];
const WASTE = [
  { lvl: 0, code: "Bill of quantities", ewc: "", sum: "Bill of quantities", m: "244,617.116924 kg", v: "192.587366 m3", blue: true, chev: "d", icon: "folder" },
  { lvl: 1, code: "Arrangement", ewc: "", sum: "", m: "222,826.236124 kg", v: "163.804731 m3", blue: true, chev: "r", icon: "factory", sel: true },
  { lvl: 1, code: "Packaging", ewc: "", sum: "", m: "21,790.880800 kg", v: "28.782635 m3", blue: true, chev: "d", icon: "waste" },
  { lvl: 2, code: "re150101", ewc: "15 01 01", sum: "Envases de papel y cartón.", m: "6,977.094200 kg", v: "9.297249 m3", icon: "waste" },
  { lvl: 2, code: "re150104", ewc: "15 01 04", sum: "Envases metálicos.", m: "0.000000 kg", v: "0.000000 m3", icon: "waste" },
  { lvl: 2, code: "re170201", ewc: "17 02 01", sum: "Madera.", m: "6,861.408200 kg", v: "6.238974 m3", icon: "waste" },
  { lvl: 2, code: "re170203", ewc: "17 02 03", sum: "Plástico.", m: "7,867.066000 kg", v: "13.104198 m3", icon: "waste" },
  { lvl: 2, code: "re170604", ewc: "17 06 04", sum: "Materiales de aislamiento distintos de los especificados en los códigos 17 06 01 y 17 06 03.", m: "85.312400 kg", v: "0.142214 m3", icon: "waste" },
];
const HEADS = [["Code"], ["Ut"], ["Summary"], ["A", 1], ["B", 1], ["C", 1], ["D", 1], ["Quantity"], ["Rate", 1], ["Amount", 1], ["Energy cost", 1], ["CO2 emissions", 1], ["Total waste mass", 1], ["Total waste volume", 1]];

const BoqRow = ({ r }) => {
  const [lvl, code, ut, sum, qty, rate, vals] = r;
  const item = lvl === 4, root = lvl === 0;
  const pink = "#fdfafd";
  return (
    <Row $cols={T1} $sel={root} $blue={item}>
      <CodeCell $pl={7.5 + 21 * lvl}>
        <Chev $mr={item ? 9 : 7.5}>{item ? <ChevRight /> : <ChevDown />}</Chev>
        {item ? <BrickSmall /> : !root && <Folder />}
        <CodeText $bold={root} $ml={root ? -0.5 : item ? 5.5 : 6}>{code}</CodeText>
      </CodeCell>
      <UnitCell $pl={6}>{ut}</UnitCell>
      <Cell $pl={7 + 21 * lvl}>{sum}</Cell>
      <Cell /><Cell /><Cell /><Cell />
      <Cell $right $pr={6} $tint={item ? pink : undefined}>{qty}</Cell>
      <Cell $right $pr={5} $tint={item ? pink : undefined}>{rate}</Cell>
      <Cell $right $bold={!item} $tint={root ? "#e5f3ff" : pink}>{vals[0]}</Cell>
      {vals.slice(1).map((v, i) => <Cell key={i} $right>{v}</Cell>)}
    </Row>
  );
};
const WasteRow = ({ r }) => {
  const pl = r.lvl === 0 ? 7 : r.lvl === 1 ? 28.5 : 70;
  return (
    <Row $cols={T2} $w={1167} $sel={r.sel}>
      <CodeCell $pl={pl} $blue={r.blue}>
        {r.chev && <Chev $mr={r.lvl === 0 ? 8 : 8.5}>{r.chev === "d" ? <ChevDown /> : <ChevRight />}</Chev>}
        {r.icon === "folder" ? <Folder /> : r.icon === "factory" ? <FactoryIcon /> : <WasteIcon />}
        <CodeText $ml={r.lvl === 0 ? 5 : 6}>{r.code}</CodeText>
      </CodeCell>
      <Cell $pl={6}>{r.ewc}</Cell>
      <LongCell $pl={5} $blue={r.blue}>{r.sum}</LongCell>
      <Cell $right $tint={r.sel ? "#e5f3ff" : "#fdfafd"} $blue={r.blue}>{r.m}</Cell>
      <Cell $right $tint={r.sel ? "#e5f3ff" : "#fdfafd"} $blue={r.blue}>{r.v}</Cell>
    </Row>
  );
};

export default function App() {
  return (
    <Window>
      <Global />
      <TitleBar>
        <QuickAccess>
          <QuickIcon><Floppy /></QuickIcon>
          <QuickIcon><UndoIcon /></QuickIcon>
          <QuickIcon><UndoIcon flip /></QuickIcon>
          <QuickIcon><Magnifier /></QuickIcon>
        </QuickAccess>
        <Title>Open BIM Quantities - [C:\...\Technical school.qto]</Title>
        <WinButtons>
          <WinBtn><S w={11} h={11}><path d="M0 6 H10" stroke="#fff" strokeWidth="1.2" /></S></WinBtn>
          <WinBtn><S w={11} h={11}><rect x=".5" y=".5" width="10" height="10" fill="none" stroke="#fff" /></S></WinBtn>
          <WinBtn><S w={11} h={11}><path d="M.5 .5 L10.5 10.5 M10.5 .5 L.5 10.5" stroke="#fff" strokeWidth="1.2" /></S></WinBtn>
        </WinButtons>
      </TitleBar>
      <AppButton><AppIcon /></AppButton>
      <TabRow>
        <RibbonTab $w={175}>Quantities of the BIM model</RibbonTab>
        <RibbonTab $w={108} $active>Bill of quantities</RibbonTab>
        <TabEnd><Globe /><HelpBook /></TabEnd>
      </TabRow>
      <Ribbon>
        <Group $w={129}>
          <GroupBody>
            <BigButton $w={66}><BigIcon><Gear /></BigIcon><BigText>{"General\nparameters"}</BigText></BigButton>
            <BigButton $w={60}><BigIcon><DbIcon /></BigIcon><BigText>{"Cost\ndatabases"}</BigText></BigButton>
          </GroupBody>
          <GroupLabel>Project</GroupLabel>
        </Group>
        <Group $w={42}>
          <GroupBody><BigButton $w={40}><BigIcon><TagsIcon /></BigIcon><BigText>Prices</BigText></BigButton></GroupBody>
          <GroupLabel>Prices</GroupLabel>
        </Group>
        <Group $w={87} $gap={2}>
          <GroupBody>
            <BigButton $w={45}><BigIcon><FieIcon /></BigIcon><BigText>Import</BigText></BigButton>
            <BigButton $w={40}><BigIcon><FieIcon up /></BigIcon><BigText>Export</BigText></BigButton>
          </GroupBody>
          <GroupLabel>FIEBDC-3</GroupLabel>
        </Group>
        <Group $w={459}>
          <GroupBody>
            <BigButton $w={59}><BigIcon><TreeIcon /></BigIcon><BigText>{"Add work\nsection"}</BigText></BigButton>
            <BigButton $w={38}><BigIcon><BrickBig /></BigIcon><BigText>{"Add\nitem"}</BigText></BigButton>
            <BigButton $w={71} $off><BigIcon><TableIcon /></BigIcon><BigText>{"Add quantity\ndetails line"}</BigText></BigButton>
            <BigButton $w={50} $off><BigIcon><CopyBig /></BigIcon><BigText>Copy</BigText></BigButton>
            <BigButton $w={30}><BigIcon><Eraser /></BigIcon><BigText>Delete</BigText></BigButton>
            <VLine />
            <SmallCol $w={60} $top={5} $gap={10}>
              <SmallRow $off><SmallOlive kind="cut" />Cut</SmallRow>
              <SmallRow $off><SmallOlive kind="copy" />Copy</SmallRow>
              <SmallRow $off><SmallOlive kind="paste" />Paste</SmallRow>
            </SmallCol>
            <SmallCol $w={123} $top={14} $gap={19}>
              <SmallRow $gap={6}><ArrowUD />Displace upwards</SmallRow>
              <SmallRow $gap={6}><ArrowUD down />Displace downwards</SmallRow>
            </SmallCol>
          </GroupBody>
          <GroupLabel>Edit</GroupLabel>
        </Group>
        <Group $w={277} $gap={0}>
          <GroupBody>
            <BigButton $w={42}><BigIcon><Binoculars /></BigIcon><BigText>Search</BigText></BigButton>
            <BigButton $w={40}><BigIcon><Funnel /></BigIcon><BigText>Filter</BigText></BigButton>
            <SmallCol $w={137} $top={5} $gap={10}>
              <SmallRow $gap={5} $pl={6}><CheckBox><Check /></CheckBox>Environmental data</SmallRow>
              <SmallRow $gap={5} $pl={6}><CheckBox><Check /></CheckBox>Waste</SmallRow>
            </SmallCol>
            <SmallCol $w={56} $top={5} $gap={10}>
              <SmallRow $gap={6}><CheckBox />Tags</SmallRow>
              <SmallRow $gap={6}><CheckBox />%BIM</SmallRow>
            </SmallCol>
          </GroupBody>
          <GroupLabel>Filter</GroupLabel>
        </Group>
        <Group $gap={0}><GroupBody /><GroupLabel /></Group>
        <Group $w={52} $gap={1}>
          <GroupBody><BigButton $w={50}><BigIcon><ReportIcon /></BigIcon><BigText>{"BoQ\nReports"}</BigText></BigButton></GroupBody>
          <GroupLabel>Reports</GroupLabel>
        </Group>
        <Group $w={105} $last $gap={3}>
          <GroupBody>
            <BigButton $w={68}><BigIcon><UpdateIcon /></BigIcon><BigText>{"Update the\nquantities"}</BigText></BigButton>
            <BigButton $w={34}><BigIcon><LockIcon /></BigIcon><BigText>Block</BigText></BigButton>
          </GroupBody>
          <GroupLabel>Update</GroupLabel>
        </Group>
      </Ribbon>
      <Main>
        <LeftCol>
          <GridWrap>
            <GridArea>
              <HeadRow $cols={T1} $h={23}>
                {HEADS.map(([t, r], i) => <HeadCell key={t} $right={r} $hot={i === 13} $noline={i === 13}>{t}</HeadCell>)}
              </HeadRow>
              {ROWS.map(r => <BoqRow key={r[1]} r={r} />)}
            </GridArea>
            <ScrollBar>
              <ScrollArrow><ArrowTiny /></ScrollArrow>
              <Thumb><Grip /><Grip /><Grip /></Thumb>
              <ScrollFill />
              <ScrollArrow><ArrowTiny down /></ScrollArrow>
            </ScrollBar>
          </GridWrap>
          <Dots $x={596} $y={592} $w={14} $h={3} $sx={3.5} $sy={3} />
          <SubTabs>
            <SubTab $w={110}>BoQ summary</SubTab>
            <SubTab $w={67} $active>Waste</SubTab>
          </SubTabs>
          <LowerPanel>
            <LowerInner>
              <HeadRow $cols={`${T2} 18px`} $h={24}>
                <HeadCell $pt={2} $pl={5}>Code</HeadCell><HeadCell $pt={2} $pl={5}>EWC code</HeadCell><HeadCell $pt={2} $pl={5}>Summary</HeadCell>
                <HeadCell $pt={2} $right>Total mass</HeadCell><HeadCell $pt={2} $right>Total volume</HeadCell><HeadCell $noline />
              </HeadRow>
              {WASTE.map(r => <WasteRow key={r.code} r={r} />)}
            </LowerInner>
          </LowerPanel>
        </LeftCol>
        <Dots $x={1206.5} $y={420} $w={3} $h={14} $sx={3} $sy={3.5} />
        <Viewer>
          <ViewerBar>
            <ToolBtn>{tb.layers}</ToolBtn><ToolSep />
            <ToolBtn>{tb.info}</ToolBtn><ToolSep />
            <ToolBtn>{tb.axes}</ToolBtn><ToolBtn>{tb.box}</ToolBtn><ToolBtn>{tb.cube2}</ToolBtn><ToolBtn>{tb.sphere}</ToolBtn><ToolBtn>{tb.orbit}</ToolBtn><ToolSep />
            <ToolBtn $on>{tb.clip1}</ToolBtn><ToolBtn>{tb.clip2}</ToolBtn><ToolBtn $on>{tb.clip3}</ToolBtn><ToolBtn $on>{tb.eye}</ToolBtn>
            <ToolSpacer />
            <ToolBtn>{tb.zoomPrev}</ToolBtn><ToolBtn $ml={1}>{tb.zoomAll}</ToolBtn><ToolBtn $ml={1}>{tb.zoom2}</ToolBtn><ToolBtn $ml={1}>{tb.redraw}</ToolBtn><ToolBtn $ml={1}>{tb.zoomWin}</ToolBtn><ToolBtn $ml={1}>{tb.hand}</ToolBtn><ToolBtn $ml={1}>{tb.maxV}</ToolBtn>
          </ViewerBar>
          <Canvas>
            <CanvasSvg viewBox="0 0 664 827">
              <Model />
              <Cube />
              <Axes />
            </CanvasSvg>
          </Canvas>
        </Viewer>
      </Main>
    </Window>
  );
}
